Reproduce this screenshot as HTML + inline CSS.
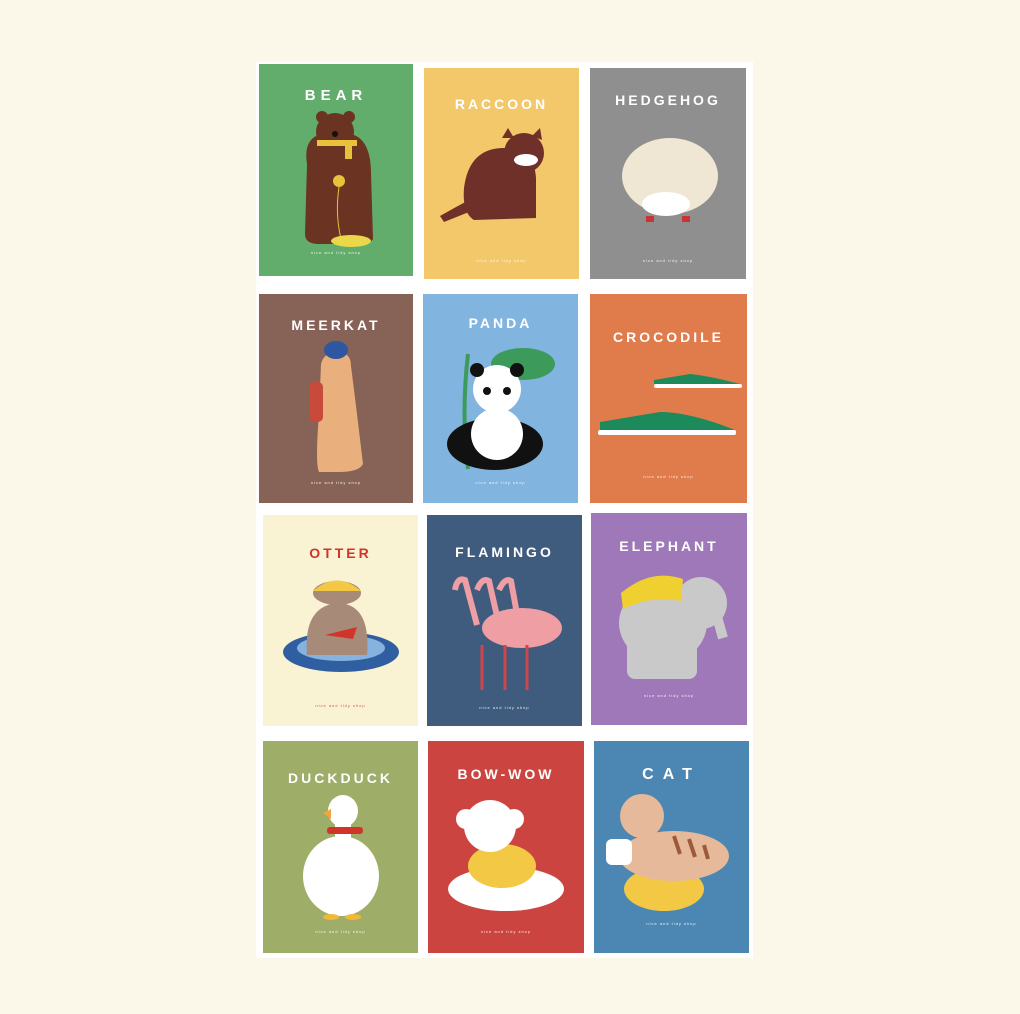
<!DOCTYPE html>
<html><head><meta charset="utf-8"><style>
*{margin:0;padding:0;box-sizing:border-box}
body{width:1020px;height:1014px;background:#fbf8ea;position:relative;overflow:hidden;font-family:"Liberation Sans",sans-serif}
.sheet{position:absolute;left:256px;top:62px;width:497px;height:896px;background:#fff}
.c{position:absolute;overflow:hidden}
.t{position:absolute;left:0;right:0;text-align:center;color:#fff;font-size:14px;font-weight:bold;letter-spacing:3px}
.f{position:absolute;left:0;right:0;text-align:center;color:#fff;font-size:4px;letter-spacing:1px;opacity:.9}
svg{position:absolute;left:0;top:0}
</style></head><body>
<div class="sheet"></div>

<div class="c" style="left:259px;top:64px;width:154px;height:212px;background:#63ad6c">
<div class="t" style="top:23px;font-size:15px;letter-spacing:5px">BEAR</div>
<svg width="154" height="212"><path d="M48 100 Q44 75 62 70 L92 70 Q112 75 112 110 L114 175 Q112 180 95 180 L60 180 Q46 180 46 170Z" fill="#6b3322"/><circle cx="76" cy="68" r="19" fill="#6b3322"/><circle cx="63" cy="53" r="6" fill="#6b3322"/><circle cx="90" cy="53" r="6" fill="#6b3322"/><circle cx="76" cy="70" r="3" fill="#111"/><rect x="58" y="76" width="40" height="6" fill="#e8c23a"/><rect x="86" y="79" width="7" height="16" fill="#e8c23a"/><circle cx="80" cy="117" r="6" fill="#e8c23a"/><path d="M80 123 Q76 150 82 175" stroke="#e8c23a" fill="none"/><ellipse cx="92" cy="177" rx="20" ry="6" fill="#e8d84a"/></svg>
<div class="f" style="top:186px">nice and tidy shop</div></div>

<div class="c" style="left:424px;top:68px;width:155px;height:211px;background:#f2c86a">
<div class="t" style="top:28px">RACCOON</div>
<svg width="155" height="211"><path d="M40 120 Q45 80 80 80 Q110 80 112 110 L112 150 L50 152 Q38 145 40 120Z" fill="#6e3028"/><circle cx="100" cy="85" r="20" fill="#6e3028"/><path d="M78 70 L84 60 L90 70Z M108 68 L116 60 L118 72Z" fill="#6e3028"/><ellipse cx="102" cy="92" rx="12" ry="6" fill="#fff"/><path d="M16 148 Q30 140 45 132 L50 142 Q30 150 20 154Z" fill="#6e3028"/></svg>
<div class="f" style="top:190px">nice and tidy shop</div></div>

<div class="c" style="left:590px;top:68px;width:156px;height:211px;background:#8f8f8f">
<div class="t" style="top:24px">HEDGEHOG</div>
<svg width="156" height="211"><ellipse cx="80" cy="108" rx="48" ry="38" fill="#efe6d4"/><ellipse cx="76" cy="136" rx="24" ry="12" fill="#fff"/><rect x="56" y="148" width="8" height="6" fill="#c33"/><rect x="92" y="148" width="8" height="6" fill="#c33"/></svg>
<div class="f" style="top:190px">nice and tidy shop</div></div>

<div class="c" style="left:259px;top:294px;width:154px;height:209px;background:#876256">
<div class="t" style="top:23px">MEERKAT</div>
<svg width="154" height="209"><path d="M62 70 Q65 58 78 58 Q92 58 92 72 L98 120 L104 170 Q100 178 80 178 L60 178 Q56 170 60 120Z" fill="#e9b07e"/><ellipse cx="77" cy="56" rx="12" ry="9" fill="#2f56a0"/><rect x="50" y="88" width="14" height="40" rx="5" fill="#c84a3a"/></svg>
<div class="f" style="top:186px">nice and tidy shop</div></div>

<div class="c" style="left:423px;top:294px;width:155px;height:209px;background:#81b4de">
<div class="t" style="top:21px">PANDA</div>
<svg width="155" height="209"><ellipse cx="100" cy="70" rx="32" ry="16" fill="#3c9a5a"/><path d="M45 60 Q38 120 45 175" stroke="#3c9a5a" stroke-width="4" fill="none"/><ellipse cx="72" cy="150" rx="48" ry="26" fill="#111"/><ellipse cx="74" cy="140" rx="26" ry="26" fill="#fff"/><circle cx="74" cy="95" r="24" fill="#fff"/><circle cx="54" cy="76" r="7" fill="#111"/><circle cx="94" cy="76" r="7" fill="#111"/><circle cx="64" cy="97" r="4" fill="#111"/><circle cx="84" cy="97" r="4" fill="#111"/></svg>
<div class="f" style="top:186px">nice and tidy shop</div></div>

<div class="c" style="left:590px;top:294px;width:157px;height:209px;background:#e07b4c">
<div class="t" style="top:35px">CROCODILE</div>
<svg width="157" height="209"><path d="M64 90 L150 90 Q120 82 100 80 L64 86Z" fill="#1c8a5b"/><rect x="64" y="90" width="88" height="4" rx="2" fill="#fff"/><path d="M10 136 L145 136 Q100 118 70 118 L10 128Z" fill="#1c8a5b"/><rect x="8" y="136" width="138" height="5" rx="2" fill="#fff"/></svg>
<div class="f" style="top:180px">nice and tidy shop</div></div>

<div class="c" style="left:263px;top:515px;width:155px;height:211px;background:#faf3d3">
<div class="t" style="top:30px;color:#d0342a">OTTER</div>
<svg width="155" height="211"><ellipse cx="78" cy="137" rx="58" ry="20" fill="#2f5fa0"/><ellipse cx="78" cy="133" rx="44" ry="13" fill="#85b2de"/><path d="M44 140 Q40 90 76 88 Q108 90 104 140Z" fill="#a88a78"/><ellipse cx="74" cy="78" rx="24" ry="12" fill="#a88a78"/><path d="M50 76 Q74 55 98 76Z" fill="#f2c845"/><path d="M62 120 L94 112 L90 124Z" fill="#d0342a"/></svg>
<div class="f" style="top:188px;color:#c44">nice and tidy shop</div></div>

<div class="c" style="left:427px;top:515px;width:155px;height:211px;background:#3f5b7e">
<div class="t" style="top:29px">FLAMINGO</div>
<svg width="155" height="211"><ellipse cx="95" cy="113" rx="40" ry="20" fill="#ef9ea4"/><path d="M28 75 Q30 62 38 65 L50 110 M50 75 Q55 62 62 66 L72 110 M72 75 Q78 62 84 66 L92 110" stroke="#ef9ea4" stroke-width="6" fill="none"/><path d="M55 130 L55 175 M78 130 L78 175 M100 130 L100 175" stroke="#d0454a" stroke-width="3"/></svg>
<div class="f" style="top:190px">nice and tidy shop</div></div>

<div class="c" style="left:591px;top:513px;width:156px;height:212px;background:#9e78b8">
<div class="t" style="top:25px">ELEPHANT</div>
<svg width="156" height="212"><ellipse cx="72" cy="110" rx="44" ry="40" fill="#c9c9c9"/><rect x="36" y="120" width="70" height="46" rx="8" fill="#c9c9c9"/><circle cx="110" cy="90" r="26" fill="#c9c9c9"/><path d="M125 100 L132 125" stroke="#c9c9c9" stroke-width="10"/><path d="M30 80 Q60 55 92 66 L90 88 Q60 82 32 96Z" fill="#f0d030"/></svg>
<div class="f" style="top:180px">nice and tidy shop</div></div>

<div class="c" style="left:263px;top:741px;width:155px;height:212px;background:#9ead67">
<div class="t" style="top:29px">DUCKDUCK</div>
<svg width="155" height="212"><ellipse cx="78" cy="135" rx="38" ry="40" fill="#fff"/><ellipse cx="80" cy="70" rx="15" ry="16" fill="#fff"/><rect x="72" y="82" width="16" height="40" fill="#fff"/><path d="M60 72 L68 68 L68 78Z" fill="#f2a53a"/><rect x="64" y="86" width="36" height="7" rx="3" fill="#d0342a"/><ellipse cx="68" cy="176" rx="8" ry="3" fill="#f2b83a"/><ellipse cx="90" cy="176" rx="8" ry="3" fill="#f2b83a"/></svg>
<div class="f" style="top:188px">nice and tidy shop</div></div>

<div class="c" style="left:428px;top:741px;width:156px;height:212px;background:#cc443f">
<div class="t" style="top:25px">BOW-WOW</div>
<svg width="156" height="212"><ellipse cx="78" cy="148" rx="58" ry="22" fill="#fff"/><ellipse cx="74" cy="125" rx="34" ry="22" fill="#f2c845"/><circle cx="62" cy="85" r="26" fill="#fff"/><circle cx="38" cy="78" r="10" fill="#fff"/><circle cx="86" cy="78" r="10" fill="#fff"/></svg>
<div class="f" style="top:188px">nice and tidy shop</div></div>

<div class="c" style="left:594px;top:741px;width:155px;height:212px;background:#4b87b2">
<div class="t" style="top:25px;font-size:16px;letter-spacing:9px">CAT</div>
<svg width="155" height="212"><ellipse cx="70" cy="148" rx="40" ry="22" fill="#f2c845"/><ellipse cx="80" cy="115" rx="55" ry="25" fill="#e6b99a"/><circle cx="48" cy="75" r="22" fill="#e6b99a"/><rect x="12" y="98" width="26" height="26" rx="6" fill="#fff"/><path d="M80 95 l6 18 M95 98 l6 18 M110 104 l4 14" stroke="#9c5a3a" stroke-width="4"/></svg>
<div class="f" style="top:180px">nice and tidy shop</div></div>
</body></html>
